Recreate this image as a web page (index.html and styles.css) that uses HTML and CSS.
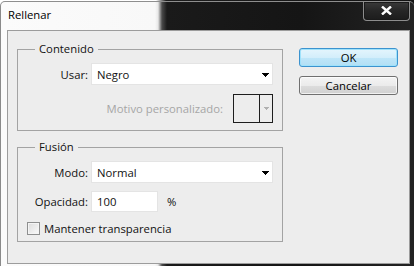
FILE: index.html
```html
<!DOCTYPE html>
<html lang="es">
<head>
<meta charset="utf-8">
<title>Rellenar</title>
<link rel="stylesheet" href="styles.css">
</head>
<body>
<div class="window">
  <div class="titlebar">
    <span class="title">Rellenar</span>
    <div class="close">
      <svg width="11" height="9" viewBox="0 0 11 9"><path d="M1 0.5L10 8.5M10 0.5L1 8.5" stroke="#fff" stroke-width="2.4" fill="none"/></svg>
    </div>
  </div>
  <div class="client">
    <div class="groups">
      <fieldset class="group">
        <legend>Contenido</legend>
        <div class="rows rows-content">
          <div class="row">
            <span class="lbl">Usar:</span>
            <div class="select"><span>Negro</span><svg class="arrow" width="7" height="4" viewBox="0 0 7 4"><rect x="0" y="0" width="7" height="1"/><rect x="1" y="1" width="5" height="1"/><rect x="2" y="2" width="3" height="1"/><rect x="3" y="3" width="1" height="1"/></svg></div>
          </div>
          <div class="row-pattern">
            <span class="disabled">Motivo personalizado:</span>
            <div class="swatch">
              <span class="swatch-color"></span>
              <span class="swatch-btn"><svg width="5" height="3" viewBox="0 0 5 3"><rect x="0" y="0" width="5" height="1" fill="#b0b0b0"/><rect x="1" y="1" width="3" height="1" fill="#b0b0b0"/><rect x="2" y="2" width="1" height="1" fill="#b0b0b0"/></svg></span>
            </div>
          </div>
        </div>
      </fieldset>
      <fieldset class="group group-blend">
        <legend>Fusión</legend>
        <div class="rows rows-blend">
          <div class="row">
            <span class="lbl">Modo:</span>
            <div class="select"><span>Normal</span><svg class="arrow" width="7" height="4" viewBox="0 0 7 4"><rect x="0" y="0" width="7" height="1"/><rect x="1" y="1" width="5" height="1"/><rect x="2" y="2" width="3" height="1"/><rect x="3" y="3" width="1" height="1"/></svg></div>
          </div>
          <div class="row">
            <span class="lbl">Opacidad:</span>
            <div class="opacity"><span class="input">100</span><span class="pct">%</span></div>
          </div>
          <div class="check-row">
            <span class="checkbox"></span>
            <span>Mantener transparencia</span>
          </div>
        </div>
      </fieldset>
    </div>
    <div class="buttons">
      <div class="btn btn-default">OK</div>
      <div class="btn">Cancelar</div>
    </div>
  </div>
</div>
</body>
</html>
```

FILE: styles.css
```css
* { box-sizing: border-box; }

html, body {
  margin: 0;
  padding: 0;
}

body {
  width: 414px;
  height: 266px;
  overflow: hidden;
  background: linear-gradient(90deg, #ffffff 0, #ffffff 156px, #1c1c1c 166px, #121212 100%);
  font-family: "Open Sans", "Noto Sans", sans-serif;
  font-size: 11.3px;
  color: #111;
}

.window {
  width: 414px;
  height: 265px;
  margin-top: 1px;
  border-top: 1px solid #8e8e8e;
  border-left: 1px solid #8a8a8a;
  border-radius: 5px 5px 0 0;
  padding: 0 4px 2px 6px;
  display: flex;
  flex-direction: column;
  background: linear-gradient(90deg, #fbfbfb 0, #f8f8f8 154px, #e8e8e8 157px, #4a4a4a 161px, #1a1a1a 166px, #151515 300px, #232323 100%);
}

.titlebar {
  height: 28px;
  display: flex;
  justify-content: space-between;
  align-items: flex-start;
}

.title {
  padding-left: 1px;
  margin-top: 5px;
  line-height: 16px;
  color: #000;
}

.close {
  width: 47px;
  height: 19px;
  border: 1px solid #8d8d8d;
  border-top: none;
  border-radius: 0 0 4px 4px;
  background: linear-gradient(180deg, #3a3a3a 0, #262626 50%, #1c1c1c 100%);
  box-shadow: inset 0 0 0 1px #1a1a1a;
  display: flex;
  align-items: center;
  justify-content: center;
  padding-bottom: 1px;
}

.client {
  flex: 1;
  background: #ededed;
  border: 1px solid #9c9c9c;
  display: flex;
  gap: 16px;
  padding: 10px 11px 0 9px;
}

.groups {
  width: 266px;
  display: flex;
  flex-direction: column;
  gap: 8px;
}

.group {
  margin: 0;
  padding: 0;
  min-inline-size: 0;
  border: 1px solid #a3a3a3;
}

.group legend {
  margin-left: 17px;
  padding: 0 4px;
  line-height: 16px;
  color: #111;
}

.rows {
  display: flex;
  flex-direction: column;
  padding: 6px 9px 7px 0;
}

.rows-content { gap: 9px; }

.rows-blend {
  gap: 8px;
  padding-bottom: 5px;
}

.row {
  display: grid;
  grid-template-columns: 70px 1fr;
  column-gap: 3px;
  align-items: center;
}

.lbl {
  text-align: right;
  color: #111;
}

.select {
  height: 22px;
  background: #fff;
  border: 1px solid #e4e4e4;
  display: flex;
  align-items: center;
  justify-content: space-between;
  padding: 0 3px 0 5px;
}

.select .arrow { fill: #000; margin-top: 1px; }

.row-pattern {
  display: flex;
  justify-content: flex-end;
  align-items: center;
  gap: 10px;
}

.disabled { color: #a6a6a6; }

.swatch {
  width: 40px;
  height: 29px;
  border: 1px solid #1e1e1e;
  display: flex;
}

.swatch-color {
  flex: 1;
  border-right: 1px solid #1e1e1e;
}

.swatch-btn {
  width: 12px;
  display: flex;
  align-items: center;
  justify-content: center;
}

.opacity {
  display: flex;
  align-items: center;
}

.input {
  width: 67px;
  height: 21px;
  background: #fff;
  border: 1px solid #e4e4e4;
  padding-left: 5px;
  line-height: 19px;
}

.pct { margin-left: 9px; }

.check-row {
  display: flex;
  align-items: center;
  gap: 4px;
  padding-left: 9px;
  margin-top: 1px;
}

.checkbox {
  width: 13px;
  height: 13px;
  border: 1px solid #8e8f8f;
  background: linear-gradient(135deg, #dcdcdc 0, #eeeeee 60%, #fafafa 100%);
  box-shadow: inset 0 0 0 1px #f4f4f4;
}

.buttons {
  width: 99px;
  margin-top: 7px;
  display: flex;
  flex-direction: column;
  gap: 9px;
}

.btn {
  height: 19px;
  border: 1px solid #707070;
  border-radius: 3px;
  background: linear-gradient(180deg, #f4f4f4 0, #ebebeb 50%, #dddddd 51%, #d0d0d0 100%);
  box-shadow: inset 0 0 0 1px rgba(255,255,255,0.7);
  display: flex;
  align-items: center;
  justify-content: center;
  color: #000;
  line-height: 16px;
}

.btn-default {
  border-color: #3c93cf;
  background: linear-gradient(180deg, #e4f5fd 0, #d3eefb 50%, #bfe6f9 51%, #b2dff5 100%);
  box-shadow: inset 0 0 0 1px #9fe2fb;
}
```
